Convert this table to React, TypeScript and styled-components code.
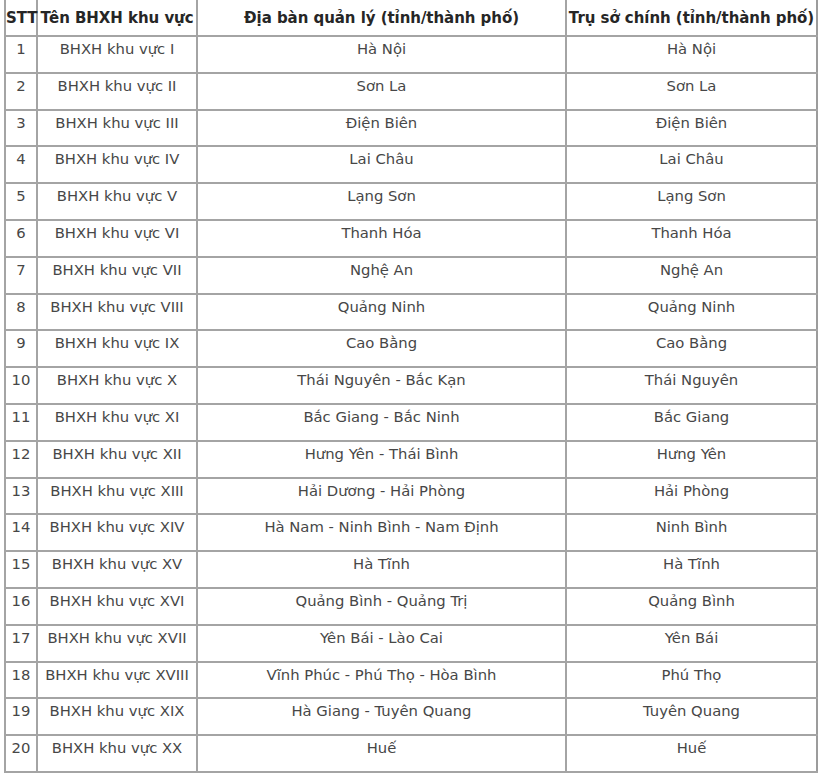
import React from "react";
import styled, { createGlobalStyle } from "styled-components";

type Region = {
  name: string;
  area: string;
  office: string;
};

const regions: Region[] = [
  { name: "BHXH khu vực I", area: "Hà Nội", office: "Hà Nội" },
  { name: "BHXH khu vực II", area: "Sơn La", office: "Sơn La" },
  { name: "BHXH khu vực III", area: "Điện Biên", office: "Điện Biên" },
  { name: "BHXH khu vực IV", area: "Lai Châu", office: "Lai Châu" },
  { name: "BHXH khu vực V", area: "Lạng Sơn", office: "Lạng Sơn" },
  { name: "BHXH khu vực VI", area: "Thanh Hóa", office: "Thanh Hóa" },
  { name: "BHXH khu vực VII", area: "Nghệ An", office: "Nghệ An" },
  { name: "BHXH khu vực VIII", area: "Quảng Ninh", office: "Quảng Ninh" },
  { name: "BHXH khu vực IX", area: "Cao Bằng", office: "Cao Bằng" },
  { name: "BHXH khu vực X", area: "Thái Nguyên - Bắc Kạn", office: "Thái Nguyên" },
  { name: "BHXH khu vực XI", area: "Bắc Giang - Bắc Ninh", office: "Bắc Giang" },
  { name: "BHXH khu vực XII", area: "Hưng Yên - Thái Bình", office: "Hưng Yên" },
  { name: "BHXH khu vực XIII", area: "Hải Dương - Hải Phòng", office: "Hải Phòng" },
  { name: "BHXH khu vực XIV", area: "Hà Nam - Ninh Bình - Nam Định", office: "Ninh Bình" },
  { name: "BHXH khu vực XV", area: "Hà Tĩnh", office: "Hà Tĩnh" },
  { name: "BHXH khu vực XVI", area: "Quảng Bình - Quảng Trị", office: "Quảng Bình" },
  { name: "BHXH khu vực XVII", area: "Yên Bái - Lào Cai", office: "Yên Bái" },
  { name: "BHXH khu vực XVIII", area: "Vĩnh Phúc - Phú Thọ - Hòa Bình", office: "Phú Thọ" },
  { name: "BHXH khu vực XIX", area: "Hà Giang - Tuyên Quang", office: "Tuyên Quang" },
  { name: "BHXH khu vực XX", area: "Huế", office: "Huế" },
];

const GlobalStyle = createGlobalStyle`
  html, body {
    margin: 0;
    padding: 0;
    background: #fff;
  }
  body {
    font-family: "DejaVu Sans", Verdana, sans-serif;
  }
`;

const Page = styled.div`
  width: 820px;
  height: 774px;
  overflow: hidden;
  padding: 0 0 0 4px;
  box-sizing: border-box;
`;

const Table = styled.table`
  width: 812px;
  border-collapse: collapse;
  table-layout: fixed;
  border-bottom: 2px solid #9c9c9c;
  border-right: 2px solid #9c9c9c;
  border-left: 2px solid #9c9c9c;
`;

const HeadCell = styled.th`
  height: 26px;
  padding: 9px 0 0;
  vertical-align: top;
  text-align: center;
  white-space: nowrap;
  overflow: visible;
  font-size: 15px;
  font-weight: bold;
  letter-spacing: -0.05px;
  color: #262626;
  border-left: 2px solid #a4a4a4;
  border-bottom: 2px solid #a4a4a4;
`;

const Row = styled.tr`
  height: 36.8px;
`;

const Cell = styled.td`
  padding: 3px 0 0;
  vertical-align: top;
  text-align: center;
  white-space: nowrap;
  font-size: 14.8px;
  line-height: 18px;
  color: #474747;
  border-left: 2px solid #a4a4a4;
  border-bottom: 2px solid #a4a4a4;
`;

export default function App() {
  return (
    <Page>
      <GlobalStyle />
      <Table>
        <colgroup>
          <col style={{ width: 32 }} />
          <col style={{ width: 160 }} />
          <col style={{ width: 369 }} />
          <col style={{ width: 251 }} />
        </colgroup>
        <thead>
          <tr>
            <HeadCell>STT</HeadCell>
            <HeadCell>Tên BHXH khu vực</HeadCell>
            <HeadCell>Địa bàn quản lý (tỉnh/thành phố)</HeadCell>
            <HeadCell>Trụ sở chính (tỉnh/thành phố)</HeadCell>
          </tr>
        </thead>
        <tbody>
          {regions.map((r, i) => (
            <Row key={r.name}>
              <Cell>{i + 1}</Cell>
              <Cell>{r.name}</Cell>
              <Cell>{r.area}</Cell>
              <Cell>{r.office}</Cell>
            </Row>
          ))}
        </tbody>
      </Table>
    </Page>
  );
}
